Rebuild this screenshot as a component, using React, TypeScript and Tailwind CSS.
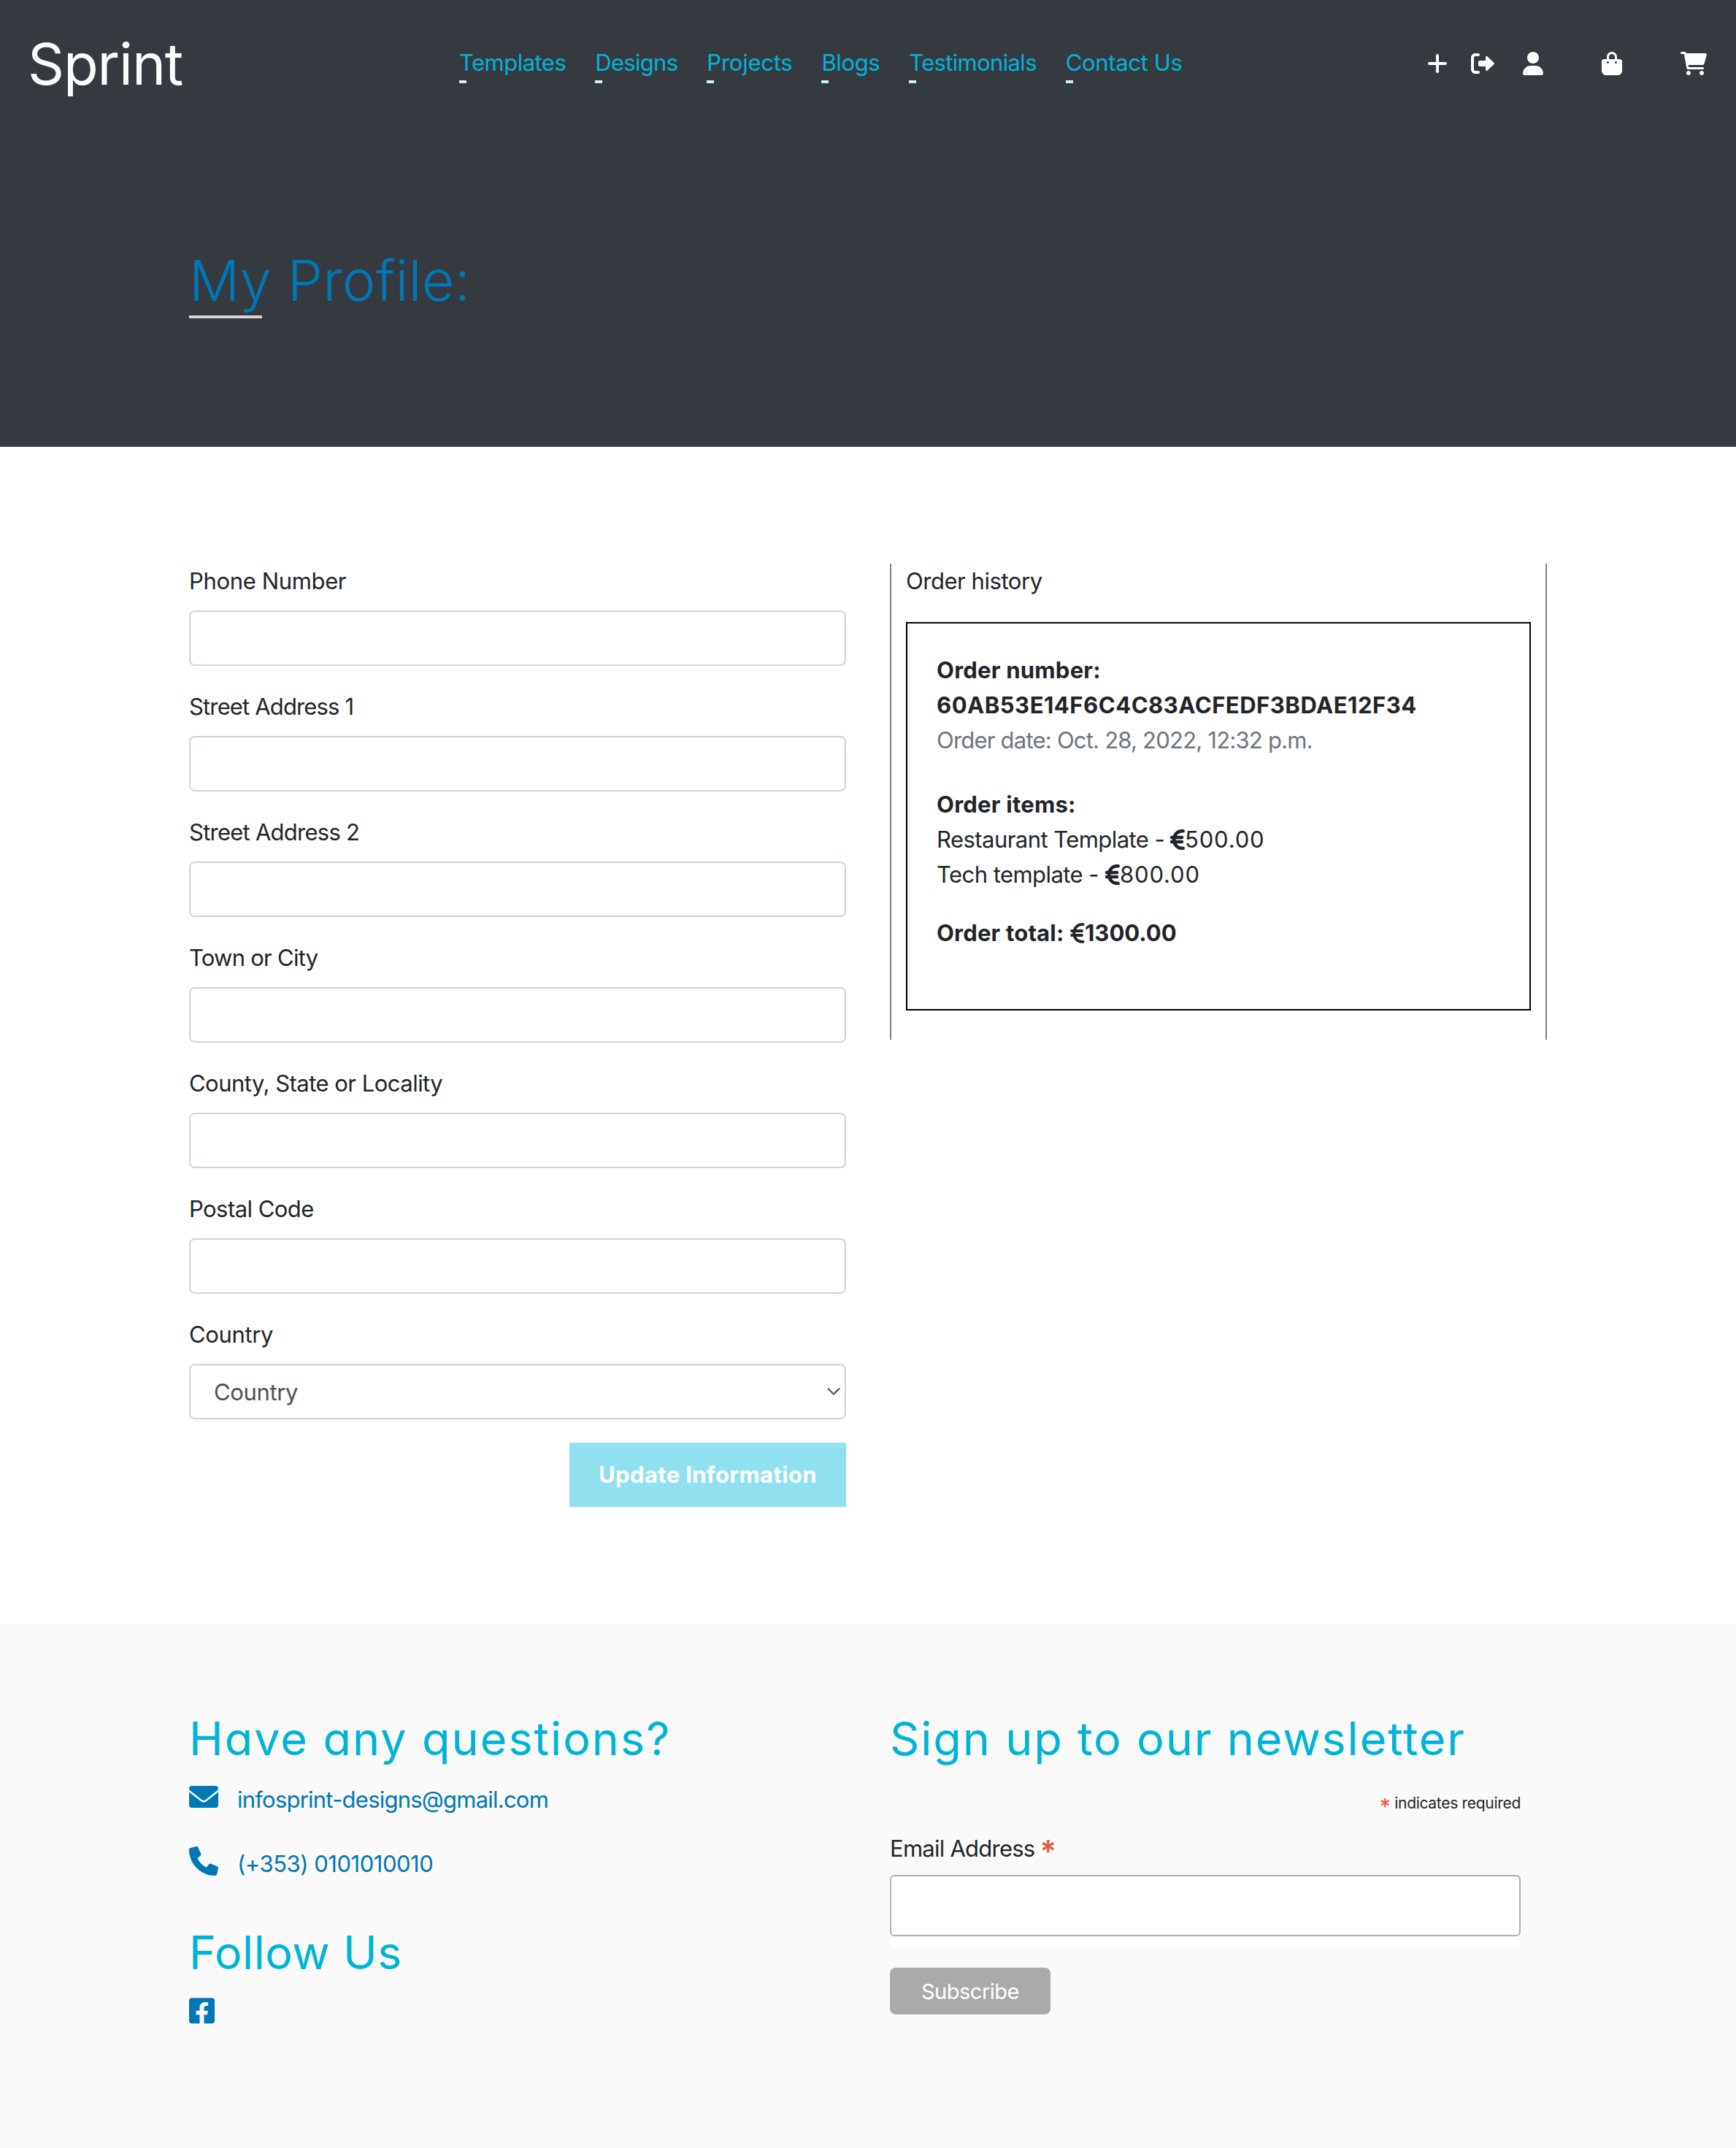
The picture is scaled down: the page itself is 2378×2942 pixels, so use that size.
import type { ReactNode } from "react";

const NAV = [
  { label: "Templates", track: "tracking-[-0.53px]" },
  { label: "Designs", track: "tracking-[-0.7px]" },
  { label: "Projects", track: "tracking-[-0.24px]" },
  { label: "Blogs", track: "tracking-[-0.4px]" },
  { label: "Testimonials", track: "tracking-[-0.66px]" },
  { label: "Contact Us", track: "tracking-[-0.37px]" },
];

const FIELDS = [
  { label: "Phone Number", track: "tracking-[-0.35px]" },
  { label: "Street Address 1", track: "tracking-[-0.85px]" },
  { label: "Street Address 2", track: "tracking-[-0.75px]" },
  { label: "Town or City", track: "tracking-[-0.75px]" },
  { label: "County, State or Locality", track: "tracking-[-0.52px]" },
  { label: "Postal Code", track: "tracking-[-0.55px]" },
];

function Icon({ box, d, className }: { box: string; d: string; className: string }) {
  return (
    <svg viewBox={box} className={className} fill="currentColor" aria-hidden="true">
      <path d={d} />
    </svg>
  );
}

const PLUS =
  "M432 256c0 17.69-14.33 32.01-32 32.01H256v144c0 17.69-14.33 31.99-32 31.99s-32-14.3-32-31.99v-144H48c-17.67 0-32-14.32-32-32.01s14.33-31.99 32-31.99H192v-144c0-17.69 14.33-32.01 32-32.01s32 14.32 32 32.01v144h144C417.7 224 432 238.3 432 256z";
const SIGN_OUT =
  "M96 480h64C177.7 480 192 465.7 192 448S177.7 416 160 416H96c-17.67 0-32-14.33-32-32V128c0-17.67 14.33-32 32-32h64C177.7 96 192 81.67 192 64S177.7 32 160 32H96C42.98 32 0 74.98 0 128v256C0 437 42.98 480 96 480zM504.8 238.5l-144.1-136c-6.975-6.578-17.2-8.375-26-4.594c-8.803 3.797-14.51 12.47-14.51 22.05l-.0918 72l-128-.001c-17.69 0-32.02 14.33-32.02 32v64c0 17.67 14.34 32 32.02 32l128 .001l.0918 71.1c0 9.578 5.707 18.25 14.51 22.05c8.803 3.781 19.03 1.984 26-4.594l144.1-136C514.4 264.4 514.4 247.6 504.8 238.5z";
const USER =
  "M224 256c70.7 0 128-57.31 128-128s-57.3-128-128-128C153.3 0 96 57.31 96 128S153.3 256 224 256zM274.7 304H173.3C77.61 304 0 381.6 0 477.3c0 19.14 15.52 34.67 34.66 34.67h378.7C432.5 512 448 496.5 448 477.3C448 381.6 370.4 304 274.7 304z";
const BAG =
  "M112 112C112 50.14 162.1 0 224 0C285.9 0 336 50.14 336 112V160H400C426.5 160 448 181.5 448 208V416C448 469 405 512 352 512H96C42.98 512 0 469 0 416V208C0 181.5 21.49 160 48 160H112V112zM160 160H288V112C288 76.65 259.3 48 224 48C188.7 48 160 76.65 160 112V160zM136 256C149.3 256 160 245.3 160 232C160 218.7 149.3 208 136 208C122.7 208 112 218.7 112 232C112 245.3 122.7 256 136 256zM312 208C298.7 208 288 218.7 288 232C288 245.3 298.7 256 312 256C325.3 256 336 245.3 336 232C336 218.7 325.3 208 312 208z";
const CART =
  "M96 0C107.5 0 117.4 8.19 119.6 19.51L121.1 32H541.8C562.1 32 578.3 52.25 572.6 72.66L518.6 264.7C514.7 278.5 502.1 288 487.8 288H170.7L179.9 336H488C501.3 336 512 346.7 512 360C512 373.3 501.3 384 488 384H159.1C148.5 384 138.6 375.8 136.4 364.5L76.14 48H24C10.75 48 0 37.25 0 24C0 10.75 10.75 0 24 0H96zM128 464C128 437.5 149.5 416 176 416C202.5 416 224 437.5 224 464C224 490.5 202.5 512 176 512C149.5 512 128 490.5 128 464zM512 464C512 490.5 490.5 512 464 512C437.5 512 416 490.5 416 464C416 437.5 437.5 416 464 416C490.5 416 512 437.5 512 464z";
const ENVELOPE =
  "M256 352c-16.53 0-33.06-5.422-47.16-16.41L0 173.2V400C0 426.5 21.49 448 48 448h416c26.51 0 48-21.49 48-48V173.2l-208.8 162.5C289.1 346.6 272.5 352 256 352zM16.29 145.3l212.2 165.1c16.19 12.6 38.87 12.6 55.06 0l212.2-165.1C505.1 137.3 512 125 512 112C512 85.49 490.5 64 464 64h-416C21.49 64 0 85.49 0 112C0 125 6.01 137.3 16.29 145.3z";
const PHONE =
  "M511.2 387l-23.25 100.8c-3.266 14.25-15.79 24.22-30.46 24.22C205.2 512 0 306.8 0 54.5c0-14.66 9.969-27.2 24.22-30.45l100.8-23.25C139.7-2.602 154.7 5.018 160.8 18.92l46.52 108.5c5.438 12.78 1.77 27.67-8.98 36.45L144.5 207.1c33.98 69.22 90.26 125.5 159.5 159.5l44.08-53.8c8.688-10.78 23.69-14.51 36.47-8.975l108.5 46.51C506.1 357.2 514.6 372.4 511.2 387z";
const FACEBOOK =
  "M400 32H48A48 48 0 0 0 0 80v352a48 48 0 0 0 48 48h137.25V327.69h-63V256h63v-54.64c0-62.15 37-96.48 93.67-96.48 27.14 0 55.52 4.84 55.52 4.84v61h-31.27c-30.81 0-40.42 19.12-40.42 38.73V256h68.78l-11 71.69h-57.78V480H400a48 48 0 0 0 48-48V80a48 48 0 0 0-48-48z";

function Euro({ heavy }: { heavy?: boolean }) {
  return (
    <svg
      viewBox="0 0 20 28"
      className="mb-px h-7 w-5 shrink-0"
      fill="none"
      stroke="currentColor"
      strokeWidth={heavy ? 4.6 : 3.8}
      strokeLinecap="round"
      aria-hidden="true"
    >
      <path d="M17.6 2.2h-1.6C9.8 2.2 5.2 7 5.2 14s4.6 11.8 10.8 11.8h1.6" />
      <path d="M2 11h14M2 17h14" />
    </svg>
  );
}

function Heading({ children, className = "" }: { children: ReactNode; className?: string }) {
  return (
    <h2
      className={`whitespace-nowrap text-[63px] font-[430] leading-[77px] text-[#00b4d8] [font-feature-settings:'cv11'] ${className}`}
    >
      {children}
    </h2>
  );
}

function Header() {
  return (
    <header className="flex h-[173px] items-center px-10 text-white">
      <div className="w-[589px] text-[78px] leading-none tracking-[-1.1px]">
        <span className="-ml-0.5 block pt-0.5">Sprint</span>
      </div>
      <nav className="flex gap-10 text-[#00b4d8]">
        {NAV.map((item) => (
          <a
            key={item.label}
            className={`relative -mt-px whitespace-nowrap leading-[48px] ${item.track}`}
          >
            {item.label}
            <span className="absolute left-0 top-full h-1 w-2.5 bg-[#caf0f8]" />
          </a>
        ))}
      </nav>
      <div className="ml-auto flex items-center">
        <Icon box="0 0 448 512" d={PLUS} className="h-8 w-7" />
        <Icon box="0 0 512 512" d={SIGN_OUT} className="ml-8 h-8 w-8" />
        <Icon box="0 0 448 512" d={USER} className="ml-[39px] h-8 w-7" />
        <Icon box="0 0 448 512" d={BAG} className="ml-20 h-8 w-7" />
        <Icon box="0 0 576 512" d={CART} className="ml-20 h-8 w-9" />
      </div>
    </header>
  );
}

function ProfileForm() {
  return (
    <form>
      {FIELDS.map((f) => (
        <div key={f.label} className="mb-8">
          <label className={`mb-4 block leading-[48px] ${f.track}`}>{f.label}</label>
          <div className="h-[76px] rounded-lg border-2 border-[#ced4da] bg-white" />
        </div>
      ))}
      <div className="mb-8">
        <label className="mb-4 block leading-[48px] tracking-[-0.35px]">Country</label>
        <div className="flex h-[76px] items-center justify-between rounded-lg border-2 border-[#ced4da] bg-white pl-8 pr-[5px] text-[#495057]">
          <span className="pt-0.5 tracking-[-0.35px]">Country</span>
          <svg viewBox="0 0 20 12" className="h-3 w-5" fill="none" stroke="currentColor" strokeWidth="2.2">
            <path d="M2 1.5l8 8 8-8" />
          </svg>
        </div>
      </div>
      <div className="flex justify-end">
        <button
          type="button"
          className="h-[88px] w-[379px] whitespace-nowrap bg-[#90e0ef] font-bold tracking-[0.35px] text-white"
        >
          Update Information
        </button>
      </div>
    </form>
  );
}

function OrderHistory() {
  return (
    <section className="self-start border-x-2 border-[#808080] px-5 pb-10">
      <p className="mb-8 leading-[48px] tracking-[-0.45px]">Order history</p>
      <div className="h-[532px] whitespace-nowrap border-2 border-black p-10 leading-[48px]">
        <p className="font-bold tracking-[0.25px]">Order number:</p>
        <p className="font-bold tracking-[0.52px]">60AB53E14F6C4C83ACFEDF3BDAE12F34</p>
        <p className="tracking-[-0.78px] text-[#6c757d]">Order date: Oct. 28, 2022, 12:32 p.m.</p>
        <p className="mt-10 font-bold tracking-[0.25px]">Order items:</p>
        <p className="flex items-center">
          <span className="w-80 tracking-[-0.55px]">Restaurant Template -</span>
          <Euro heavy />
          <span className="tracking-[0.85px]">500.00</span>
        </p>
        <p className="flex items-center">
          <span className="w-[231px] tracking-[-0.55px]">Tech template -</span>
          <Euro heavy />
          <span className="tracking-[0.85px]">800.00</span>
        </p>
        <p className="mt-8 flex items-center font-bold">
          <span className="w-[183px] tracking-[0.2px]">Order total:</span>
          <Euro />
          <span>1300.00</span>
        </p>
      </div>
    </section>
  );
}

function Footer() {
  return (
    <footer className="grid h-[718px] grid-cols-[900px_900px] content-start gap-x-[60px] bg-[#fafafa] px-[259px] pt-[119px]">
      <div>
        <Heading className="tracking-[1.9px]">Have any questions?</Heading>
        <a className="mt-5 flex h-12 items-center text-[#0077b6]">
          <Icon box="0 0 512 512" d={ENVELOPE} className="mb-[7px] h-10 w-10" />
          <span className="ml-[26px] pt-0.5 tracking-[-0.77px]">infosprint-designs@gmail.com</span>
        </a>
        <a className="mt-10 flex h-12 items-center text-[#0077b6]">
          <Icon box="0 0 512 512" d={PHONE} className="mb-[7px] h-10 w-10" />
          <span className="ml-[26px] pt-0.5 tracking-[-0.48px]">(+353) 0101010010</span>
        </a>
        <Heading className="mt-[60px] tracking-[0.3px]">Follow Us</Heading>
        <a className="mt-[21px] block text-[#0077b6]">
          <Icon box="0 0 448 512" d={FACEBOOK} className="h-10 w-[35px]" />
        </a>
      </div>
      <div className="w-[864px]">
        <Heading className="tracking-[1.8px]">Sign up to our newsletter</Heading>
        <p className="mt-[33px] flex h-[33px] items-center justify-end text-[21px]">
          <span className="mr-[5px] mt-2 text-[30px] font-medium leading-none text-[#e85c41]">*</span>
          <span className="tracking-[-0.3px]">indicates required</span>
        </p>
        <div className="mt-[22px] flex h-[48px] items-center">
          <span className="tracking-[-0.75px]">Email Address</span>
          <span className="ml-[7px] mt-2 text-[42px] font-semibold leading-none text-[#e85c41]">*</span>
        </div>
        <div className="mt-3 h-[84px] rounded-md border-2 border-[#abb0b2] bg-white" />
        <div className="mt-1 h-3 rounded-md bg-white" />
        <button
          type="button"
          className="mt-[27px] h-16 w-[220px] rounded-lg bg-[#aaaaaa] pt-0.5 text-[29px] tracking-[-0.5px] text-white"
        >
          Subscribe
        </button>
      </div>
    </footer>
  );
}

export default function App() {
  return (
    <div className="w-[2378px] bg-white font-['Inter',sans-serif] text-[31px] text-[#212529]">
      <div className="h-[612px] bg-[#353a41]">
        <Header />
        <div className="px-[259px] pt-[163px]">
          <h1 className="relative w-max text-[77px] font-[340] leading-[96px] tracking-[0.2px] text-[#0077b6]">
            <span className="absolute left-0 top-full h-1 w-[100px] bg-[#d6d6d6]" />
            <span className="relative">My Profile:</span>
          </h1>
        </div>
      </div>
      <main className="grid h-[1612px] grid-cols-[900px_900px] gap-x-[60px] px-[259px] pt-40">
        <ProfileForm />
        <OrderHistory />
      </main>
      <Footer />
    </div>
  );
}
